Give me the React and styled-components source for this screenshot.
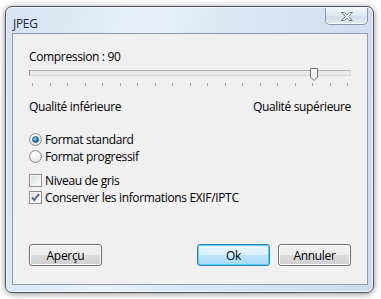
import React from 'react'
import styled, { createGlobalStyle } from 'styled-components'

const Global = createGlobalStyle`
  html, body { margin: 0; padding: 0; background: #ffffff; }
  body { font-family: "Segoe UI", "Open Sans", "Noto Sans", sans-serif; }
`

const Page = styled.div`
  width: 381px;
  height: 299px;
  padding: 6px 7px 0 5px;
  box-sizing: border-box;
`

const Window = styled.div`
  width: 369px;
  height: 287px;
  box-sizing: border-box;
  border: 1px solid #4d5560;
  border-radius: 7px;
  background: linear-gradient(100deg, #d5e2f1 0%, #e9f0f8 35%, #dbe6f3 55%, #cddcee 100%);
  box-shadow: 0 1px 6px rgba(0, 0, 0, 0.45), inset 0 0 0 1px rgba(255, 255, 255, 0.75);
  display: flex;
  flex-direction: column;
  padding: 0 5px 7px 6px;
`

const TitleBar = styled.div`
  height: 26px;
  display: flex;
  justify-content: space-between;
  align-items: flex-start;
`

const Title = styled.span`
  font-size: 12px;
  color: #1e2a38;
  padding: 8px 0 0 1px;
  letter-spacing: -0.3px;
`

const CloseButton = styled.div`
  width: 41px;
  height: 16px;
  margin-top: 1px;
  border: 1px solid #8796a9;
  border-top: none;
  border-radius: 0 0 5px 5px;
  background: linear-gradient(#f3f6fa, #dde6f1 50%, #d2dcea 51%, #e3eaf3);
  box-shadow: inset 0 -1px 0 rgba(255, 255, 255, 0.8);
  display: flex;
  align-items: center;
  justify-content: center;
`

const Client = styled.div`
  flex: 1;
  background: #f0f0f0;
  border: 1px solid #8e9cae;
  display: flex;
  flex-direction: column;
  padding: 15px 16px 0 16px;
  font-size: 12px;
  letter-spacing: -0.35px;
  color: #000;
`

const Label = styled.div`
  line-height: 16px;
  height: 16px;
`

const SliderArea = styled.div`
  position: relative;
  margin-top: 4px;
  height: 20px;
`

const Track = styled.div`
  height: 6px;
  margin-top: 1px;
  box-sizing: border-box;
  border: 1px solid #d6d6d6;
  border-top-color: #b2b2b2;
  border-left-color: #8f8f8f;
  background: #e7eaea;
`

const Ticks = styled.div`
  display: flex;
  justify-content: space-between;
  margin: 7px 3px 0 3px;
`

const Tick = styled.span`
  width: 1px;
  height: 3px;
  background: #a0a0a0;
`

const Thumb = styled.svg`
  position: absolute;
  top: -1px;
  left: ${p => p.$left}px;
`

const QualityRow = styled.div`
  display: flex;
  justify-content: space-between;
  margin-top: 10px;
  line-height: 16px;
`

const Group = styled.div`
  display: flex;
  flex-direction: column;
  gap: 1px;
  margin-top: ${p => p.$top}px;
`

const Option = styled.div`
  display: flex;
  align-items: center;
  height: 16px;
  gap: 3px;
`

const RadioMark = styled.span`
  width: 11px;
  height: 11px;
  border-radius: 50%;
  border: 1px solid #8b8d8f;
  background: radial-gradient(circle at 40% 35%, #ffffff 0%, #e9e9e9 60%, #d2d2d2 100%);
  display: flex;
  align-items: center;
  justify-content: center;
  &::after {
    content: '';
    width: 5px;
    height: 5px;
    border-radius: 50%;
    display: ${p => (p.$checked ? 'block' : 'none')};
    background: radial-gradient(circle at 35% 30%, #9fd8f7 0%, #2a83be 55%, #10467a 100%);
    border: 1px solid #1e5a8c;
  }
`

const CheckMark = styled.span`
  width: 11px;
  height: 11px;
  border: 1px solid #8b8d8f;
  background: linear-gradient(135deg, #dcdcdc 0%, #f4f4f4 70%, #ffffff 100%);
  box-shadow: inset 0 0 0 1px #f7f7f7;
  display: flex;
  align-items: center;
  justify-content: center;
`

const Buttons = styled.div`
  display: flex;
  align-items: center;
  margin-top: auto;
  margin-bottom: 18px;
  gap: 8px;
`

const Button = styled.button`
  width: 73px;
  height: 22px;
  box-sizing: border-box;
  font-family: inherit;
  font-size: 12px;
  letter-spacing: -0.3px;
  color: #000;
  padding: 0;
  border-radius: 3px;
  border: 1px solid ${p => (p.$primary ? '#3c7fb1' : '#707070')};
  background: ${p =>
    p.$primary
      ? 'linear-gradient(#eaf6fd 0%, #d9f0fc 50%, #bee6fd 51%, #a7d9f5 100%)'
      : 'linear-gradient(#f2f2f2 0%, #ebebeb 50%, #dddddd 51%, #cfcfcf 100%)'};
  box-shadow: inset 0 0 0 1px ${p => (p.$primary ? '#48d4ff' : '#fcfcfc')};
  margin-right: ${p => (p.$push ? 'auto' : '0')};
`

const ticks = Array.from({ length: 19 })

export default function App() {
  return (
    <Page>
      <Global />
      <Window>
        <TitleBar>
          <Title>JPEG</Title>
          <CloseButton>
            <svg width="14" height="11" viewBox="0 0 14 11">
              <path
                d="M1.5 1.5h3l2.5 2.4 2.5-2.4h3l-4 4 4 4h-3L7 7.1 4.5 9.5h-3l4-4z"
                fill="#ffffff"
                stroke="#6f7a88"
                strokeWidth="1"
                strokeLinejoin="round"
              />
            </svg>
          </CloseButton>
        </TitleBar>
        <Client>
          <Label>Compression : 90</Label>
          <SliderArea>
            <Track />
            <Ticks>
              {ticks.map((_, i) => (
                <Tick key={i} />
              ))}
            </Ticks>
            <Thumb $left={281} width="8" height="13" viewBox="0 0 8 13">
              <path d="M0.5 0.5h7v8.5l-3.5 3.5-3.5-3.5z" fill="#f3f3f3" stroke="#6d6d6d" />
              <path d="M1.5 1.5h5v7" fill="none" stroke="#ffffff" />
            </Thumb>
          </SliderArea>
          <QualityRow>
            <span>Qualité inférieure</span>
            <span>Qualité supérieure</span>
          </QualityRow>
          <Group $top={16}>
            <Option>
              <RadioMark $checked />
              <span>Format standard</span>
            </Option>
            <Option>
              <RadioMark />
              <span>Format progressif</span>
            </Option>
          </Group>
          <Group $top={8}>
            <Option>
              <CheckMark />
              <span>Niveau de gris</span>
            </Option>
            <Option>
              <CheckMark>
                <svg width="9" height="9" viewBox="0 0 9 9">
                  <path d="M1 4.5l2.2 2.6L8 1" fill="none" stroke="#4a5f97" strokeWidth="1.8" />
                </svg>
              </CheckMark>
              <span>Conserver les informations EXIF/IPTC</span>
            </Option>
          </Group>
          <Buttons>
            <Button $push>Aperçu</Button>
            <Button $primary>Ok</Button>
            <Button>Annuler</Button>
          </Buttons>
        </Client>
      </Window>
    </Page>
  )
}
